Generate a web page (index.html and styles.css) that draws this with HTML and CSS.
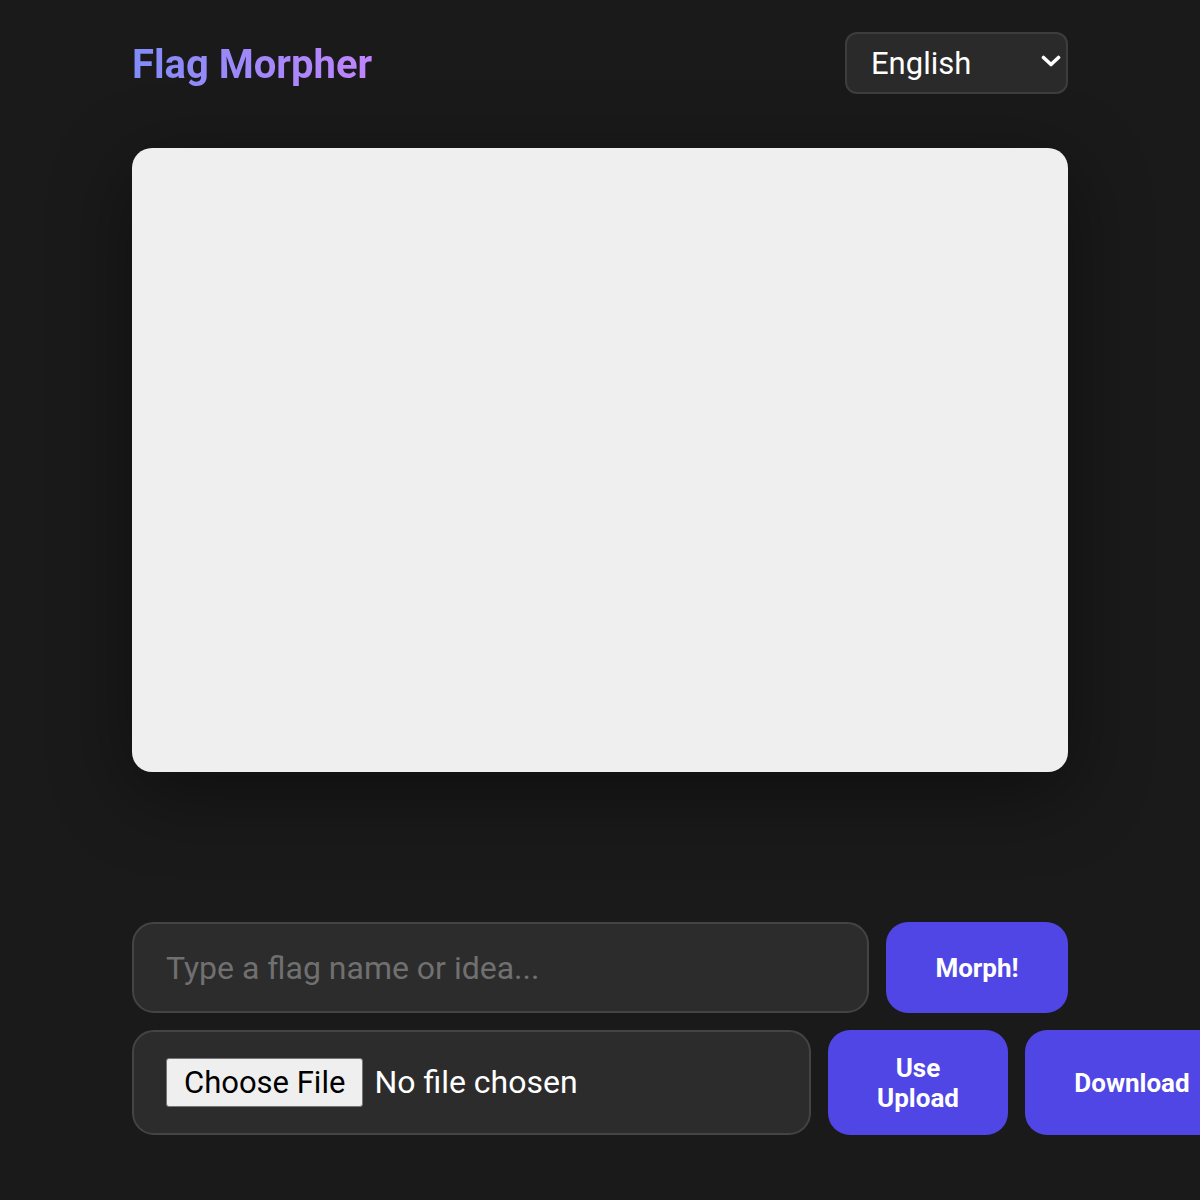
FILE: index.html
```html
<!DOCTYPE html>
<html lang="en">
<head>
    <meta charset="UTF-8">
    <meta name="viewport" content="width=device-width, initial-scale=1.0">
    <title>Flag Morpher</title>
    <link rel="stylesheet" href="styles.css">
</head>
<body>
    <div class="container">
        <header class="header">
            <h1 class="title">Flag Morpher</h1>
            <div class="lang-wrap">
                <select id="lang" class="lang-select">
                    <option value="en">English</option>
                    <option value="es">Español</option>
                    <option value="fr">Français</option>
                    <option value="de">Deutsch</option>
                </select>
                <svg class="lang-arrow" width="20" height="13" viewBox="0 0 20 13">
                    <path d="M2.5 2.5 L10 9.5 L17.5 2.5" fill="none" stroke="#fff" stroke-width="3.6" stroke-linecap="round" stroke-linejoin="round"/>
                </svg>
            </div>
        </header>

        <canvas id="flagCanvas" class="flag-canvas" width="936" height="624"></canvas>

        <div class="controls">
            <div class="row">
                <input type="text" id="prompt" class="text-input" placeholder="Type a flag name or idea...">
                <button type="button" class="btn btn-morph">Morph!</button>
            </div>
            <div class="row">
                <input type="file" id="upload" class="file-input" accept="image/*">
                <button type="button" class="btn btn-upload">Use Upload</button>
                <button type="button" class="btn btn-download">Download</button>
            </div>
        </div>
    </div>
</body>
</html>
```

FILE: styles.css
```css
* {
    box-sizing: border-box;
}
body {
    margin: 0;
    background: #1a1a1a;
    color: #fff;
    font-family: Roboto, "Liberation Sans", sans-serif;
    overflow-x: hidden;
}
.container {
    width: 936px;
    margin: 0 auto;
    padding-top: 32px;
}
.header {
    display: flex;
    align-items: center;
    justify-content: space-between;
    height: 62px;
}
.title {
    margin: 2px 0 0;
    font-size: 40px;
    font-weight: 700;
    background: linear-gradient(90deg, #818cf8, #c084fc);
    -webkit-background-clip: text;
    background-clip: text;
    color: transparent;
}
.lang-wrap {
    position: relative;
}
.lang-select {
    appearance: none;
    -webkit-appearance: none;
    width: 223px;
    height: 62px;
    padding: 0 50px 0 24px;
    background: #2a2a2a;
    color: #fff;
    border: 2px solid #3d3d3d;
    border-radius: 12px;
    font-family: Roboto, "Liberation Sans", sans-serif;
    font-size: 31px;
}
.lang-arrow {
    position: absolute;
    right: 7px;
    top: 23px;
    pointer-events: none;
}
.flag-canvas {
    display: block;
    width: 936px;
    height: 624px;
    margin-top: 54px;
    background: #efefef;
    border-radius: 20px;
    box-shadow: 0 20px 80px rgba(0, 0, 0, 0.45);
}
.controls {
    margin-top: 150px;
    display: flex;
    flex-direction: column;
    gap: 17px;
}
.row {
    display: flex;
    gap: 17px;
}
.text-input {
    flex: none;
    width: 737px;
    height: 91px;
    padding: 0 32px;
    background: #2c2c2c;
    color: #fff;
    border: 2px solid #444;
    border-radius: 22px;
    font-family: Roboto, "Liberation Sans", sans-serif;
    font-size: 32px;
    outline: none;
}
.text-input::placeholder {
    color: #707070;
}
.file-input {
    flex: none;
    width: 679px;
    height: 105px;
    padding: 26px 32px;
    background: #2c2c2c;
    color: #fff;
    border: 2px solid #444;
    border-radius: 22px;
    font-family: Roboto, "Liberation Sans", sans-serif;
    font-size: 32px;
}
.file-input::file-selector-button {
    margin-right: 11px;
    padding: 5px 17px;
    background: #efefef;
    color: #000;
    border: 1px solid #767676;
    border-radius: 3px;
    font-family: Roboto, "Liberation Sans", sans-serif;
    font-size: 31px;
}
.btn {
    flex: none;
    background: #4f46e5;
    color: #fff;
    border: none;
    border-radius: 22px;
    font-family: Roboto, "Liberation Sans", sans-serif;
    font-size: 26px;
    font-weight: 700;
    cursor: pointer;
}
.btn:hover {
    background: #4338ca;
}
.btn-morph {
    width: 182px;
    height: 91px;
}
.btn-upload {
    width: 180px;
    height: 105px;
    padding: 0 40px;
}
.btn-download {
    width: 214px;
    height: 105px;
}
```
